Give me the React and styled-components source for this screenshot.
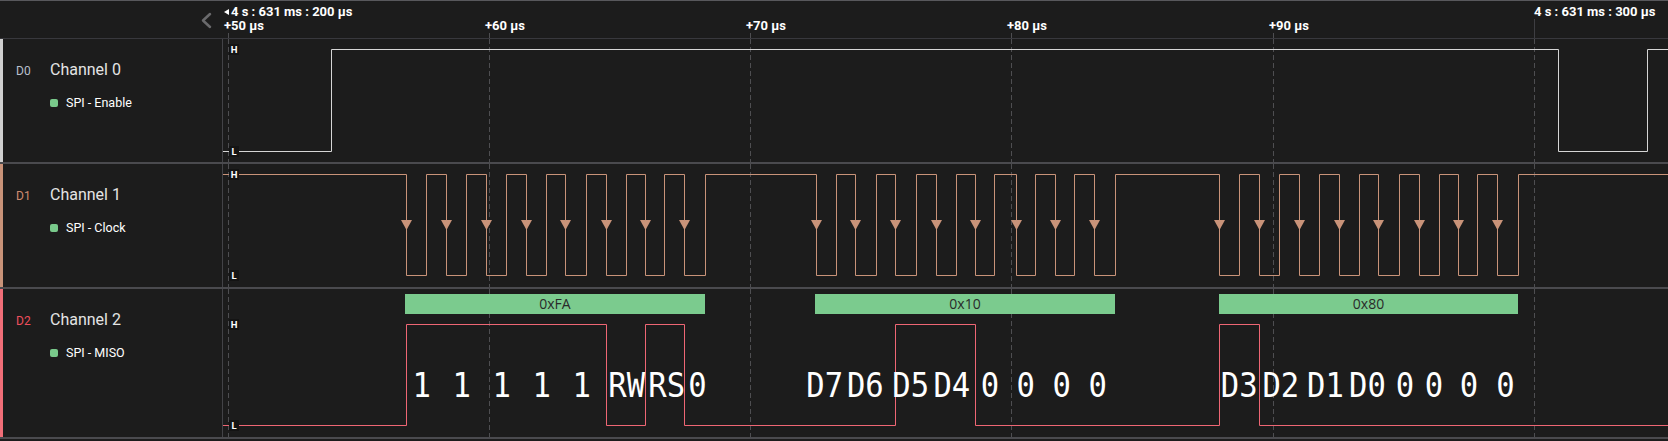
import styled, { createGlobalStyle } from "styled-components";

const GlobalStyle = createGlobalStyle`
  html, body {
    margin: 0;
    background: #1c1c1c;
  }
  body {
    font-family: Roboto, "Liberation Sans", sans-serif;
    color: #e2e2e2;
  }
`;

// page x where the waveform canvas starts, and the time grid (every 10 µs)
const WAVE_LEFT = 223;
const WAVE_WIDTH = 1668 - WAVE_LEFT;
const GRID = [228, 489, 750, 1011, 1273, 1534];
const TICKS = [
  { x: 228, label: "+50 µs" },
  { x: 489, label: "+60 µs" },
  { x: 750, label: "+70 µs" },
  { x: 1011, label: "+80 µs" },
  { x: 1273, label: "+90 µs" },
];

const BYTE1 = {
  fall: [406, 446, 486, 526, 565, 606, 645, 684],
  rise: [426, 466, 506, 546, 586, 626, 664, 705],
};
const BYTE2 = {
  fall: [816, 855, 895, 936, 975, 1016, 1055, 1094],
  rise: [836, 876, 916, 956, 994, 1035, 1074, 1115],
};
const BYTE3 = {
  fall: BYTE1.fall.map((x) => x + 813),
  rise: BYTE1.rise.map((x) => x + 813),
};
const BYTES = [BYTE1, BYTE2, BYTE3];

const FRAMES = [
  { x: 405, w: 300, value: "0xFA" },
  { x: 815, w: 300, value: "0x10" },
  { x: 1219, w: 299, value: "0x80" },
];

const BITS = [
  [421.7, "1"], [461.7, "1"], [501.7, "1"], [541.7, "1"], [581.7, "1"],
  [626.7, "RW"], [666.7, "RS"], [697.5, "0"],
  [824.7, "D7"], [865.3, "D6"], [910.7, "D5"], [951.8, "D4"],
  [990, "0"], [1025.8, "0"], [1061.7, "0"], [1097.7, "0"],
  [1239.2, "D3"], [1280.8, "D2"], [1325.5, "D1"], [1367.5, "D0"],
  [1405, "0"], [1434, "0"], [1469, "0"], [1505.5, "0"],
];

const CHANNELS = [
  {
    id: "D0", name: "Channel 0", analyzer: "SPI - Enable",
    accent: "#d0d0d0", tag: "#b9c0cc", line: "#d6d6d6",
    height: 123, high: 10.5, low: 112.5, startHigh: false,
    edges: [331, 1558, 1647],
  },
  {
    id: "D1", name: "Channel 1", analyzer: "SPI - Clock",
    accent: "#c99379", tag: "#cf8b70", line: "#c99379",
    height: 123, high: 10.5, low: 111.5, startHigh: true,
    edges: BYTES.flatMap((b) => b.fall.flatMap((f, i) => [f, b.rise[i]])),
    clock: true,
  },
  {
    id: "D2", name: "Channel 2", analyzer: "SPI - MISO",
    accent: "#f06e78", tag: "#ee4f5c", line: "#ee6674",
    height: 148, high: 35.5, low: 136.5, startHigh: false,
    edges: [406, 606, 645, 684, 895, 975, 1219, 1259],
    decoded: true,
  },
];

const stepPath = (edges, high, low, startHigh) => {
  let up = startHigh;
  let d = `M${WAVE_LEFT} ${up ? high : low}`;
  edges.forEach((x) => {
    up = !up;
    d += ` H${x + 0.5} V${up ? high : low}`;
  });
  return d + " H1668";
};

const Screen = styled.div`
  width: 1668px;
  height: 441px;
  overflow: hidden;
  background: #1c1c1c;
  border-top: 1px solid #58585c;
  box-sizing: border-box;
  display: flex;
  flex-direction: column;
`;

const Header = styled.div`
  height: 38px;
  flex: none;
  box-sizing: border-box;
  border-bottom: 1px solid #38383d;
  display: grid;
  grid-template-columns: ${WAVE_LEFT}px 1fr;
`;

const HeaderSide = styled.div`
  display: flex;
  justify-content: flex-end;
  align-items: flex-start;
  padding: 10px 11px 0 0;
`;

const Ruler = styled.div`
  position: relative;
`;

const RulerMarks = styled.svg`
  display: block;
`;

const Stamp = styled.div`
  position: absolute;
  left: ${(p) => p.$x}px;
  top: ${(p) => p.$top}px;
  display: flex;
  align-items: center;
  font-size: 13px;
  line-height: 15px;
  font-weight: 700;
  color: #ffffff;
  white-space: nowrap;
`;

const Caret = styled.span`
  width: 0;
  height: 0;
  border-top: 3px solid transparent;
  border-bottom: 3px solid transparent;
  border-right: 5px solid #ffffff;
  margin-right: 2px;
`;

const Row = styled.div`
  height: ${(p) => p.$h}px;
  flex: none;
  border-bottom: 2px solid #4a4a4e;
  display: grid;
  grid-template-columns: ${WAVE_LEFT}px 1fr;
`;

const ChannelInfo = styled.div`
  box-sizing: border-box;
  border-left: 3px solid ${(p) => p.$accent};
  border-right: 1px solid #434347;
  padding: 21px 0 0 13px;
`;

const Title = styled.div`
  display: flex;
  align-items: baseline;
  line-height: 19px;
`;

const Tag = styled.span`
  width: 34px;
  font-size: 12px;
  color: ${(p) => p.$color};
`;

const Name = styled.span`
  font-size: 16px;
  color: #e4e4e4;
`;

const Analyzer = styled.div`
  display: flex;
  align-items: center;
  margin: 14px 0 0 34px;
  font-size: 12.5px;
  line-height: 15px;
  color: #ffffff;
`;

const Dot = styled.span`
  width: 8px;
  height: 8px;
  border-radius: 2px;
  background: #79c98b;
  margin-right: 8px;
`;

const WaveSvg = styled.svg`
  display: block;
`;

const LevelText = styled.text`
  font-family: Roboto, "Liberation Sans", sans-serif;
  font-size: 9.5px;
  font-weight: 700;
  fill: #ffffff;
`;

const FrameText = styled.text`
  font-family: "Open Sans", "DejaVu Sans", sans-serif;
  font-size: 14px;
  fill: #2a2a2a;
`;

const BitText = styled.text`
  font-family: "DejaVu Sans Mono", "Liberation Mono", monospace;
  font-size: 34px;
  fill: #ffffff;
`;

const Chevron = () => (
  <svg width="12" height="18" viewBox="0 0 12 18">
    <polyline
      points="10,3 3,9.5 10,16"
      fill="none"
      stroke="#6a6a6c"
      strokeWidth="2.5"
      strokeLinecap="round"
      strokeLinejoin="round"
    />
  </svg>
);

const LevelTag = ({ y, label }) => (
  <g>
    <rect x={229} y={y - 5.5} width={10} height={11} fill="#141414" />
    <LevelText x={234} y={y + 3} textAnchor="middle">
      {label}
    </LevelText>
  </g>
);

const Trace = ({ ch }) => (
  <WaveSvg
    width={WAVE_WIDTH}
    height={ch.height}
    viewBox={`${WAVE_LEFT} 0 ${WAVE_WIDTH} ${ch.height}`}
  >
    {GRID.map((x) => (
      <line
        key={x}
        x1={x + 0.5}
        x2={x + 0.5}
        y1={0}
        y2={ch.height}
        stroke="#4e4e51"
        strokeDasharray="5 3"
      />
    ))}
    <path
      d={stepPath(ch.edges, ch.high, ch.low, ch.startHigh)}
      fill="none"
      stroke={ch.line}
      strokeWidth="1"
    />
    {ch.clock &&
      BYTES.flatMap((b) => b.fall).map((x) => (
        <polygon
          key={x}
          points={`${x - 5},${ch.high + 45.5} ${x + 6},${ch.high + 45.5} ${x + 0.5},${ch.high + 55.5}`}
          fill={ch.line}
        />
      ))}
    <LevelTag y={ch.high} label="H" />
    <LevelTag y={ch.low} label="L" />
    {ch.decoded &&
      FRAMES.map((f) => (
        <g key={f.value}>
          <rect x={f.x} y={5} width={f.w} height={20} fill="#7bcb8e" />
          <FrameText x={f.x + f.w / 2} y={20.3} textAnchor="middle">
            {f.value}
          </FrameText>
        </g>
      ))}
    {ch.decoded &&
      BITS.map(([x, t], i) => (
        <BitText
          key={i}
          transform={`translate(${x} 107.5) scale(0.9 1)`}
          textAnchor="middle"
        >
          {t}
        </BitText>
      ))}
  </WaveSvg>
);

export default function App() {
  return (
    <>
      <GlobalStyle />
      <Screen>
        <Header>
          <HeaderSide>
            <Chevron />
          </HeaderSide>
          <Ruler>
            <RulerMarks
              width={WAVE_WIDTH}
              height={37}
              viewBox={`${WAVE_LEFT} 1 ${WAVE_WIDTH} 37`}
            >
              {GRID.slice(0, 5).map((x) => (
                <line
                  key={x}
                  x1={x + 0.5}
                  x2={x + 0.5}
                  y1={33}
                  y2={38}
                  stroke="#4e4e51"
                  strokeDasharray="5 3"
                />
              ))}
              <line x1={1534.5} x2={1534.5} y1={19} y2={38} stroke="#3e3e42" />
            </RulerMarks>
            <Stamp $x={1} $top={3}>
              <Caret />
              4 s : 631 ms : 200 µs
            </Stamp>
            {TICKS.map((t) => (
              <Stamp key={t.label} $x={t.x - WAVE_LEFT - 4} $top={17}>
                {t.label}
              </Stamp>
            ))}
            <Stamp $x={1534 - WAVE_LEFT} $top={3}>
              4 s : 631 ms : 300 µs
            </Stamp>
          </Ruler>
        </Header>
        {CHANNELS.map((ch) => (
          <Row key={ch.id} $h={ch.height}>
            <ChannelInfo $accent={ch.accent}>
              <Title>
                <Tag $color={ch.tag}>{ch.id}</Tag>
                <Name>{ch.name}</Name>
              </Title>
              <Analyzer>
                <Dot />
                {ch.analyzer}
              </Analyzer>
            </ChannelInfo>
            <Trace ch={ch} />
          </Row>
        ))}
      </Screen>
    </>
  );
}
